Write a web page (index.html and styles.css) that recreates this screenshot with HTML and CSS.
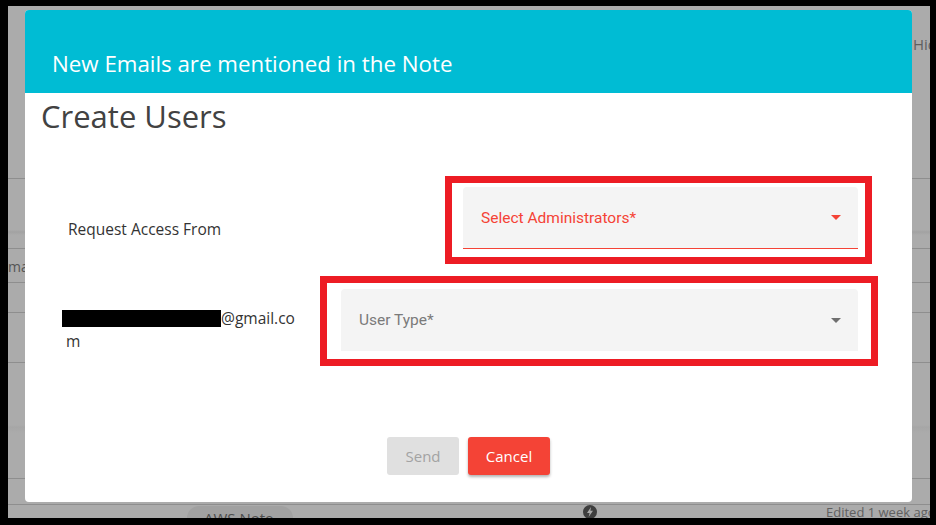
FILE: index.html
```html
<!DOCTYPE html>
<html lang="en">
<head>
  <meta charset="UTF-8">
  <meta name="viewport" content="width=device-width, initial-scale=1.0">
  <title>Create Users</title>
  <link rel="stylesheet" href="styles.css">
</head>
<body>

  <div class="screen">
    <!-- Page behind the dialog -->
    <div class="backdrop">
      <div class="bg-row bg-top"><span class="bg-hint">Hide</span></div>
      <div class="bg-row bg-r2"></div>
      <div class="bg-row bg-r3"><span class="bg-cut">ma</span></div>
      <div class="bg-row bg-r4"></div>
      <div class="bg-row bg-r5"></div>
      <div class="bg-row bg-r6"></div>
      <div class="bg-row bg-r7"></div>
      <div class="bg-footer">
        <span class="note-pill">AWS Note</span>
        <span class="bolt">
          <svg width="14" height="14" viewBox="0 0 14 14">
            <circle cx="7" cy="7" r="7" fill="#3f3f3f"/>
            <polygon points="8,2 4,8 6.6,8 5.6,12 10,5.8 7.4,5.8" fill="#ababab"/>
          </svg>
        </span>
        <span class="edited">Edited 1 week ago</span>
      </div>
    </div>

    <!-- Dialog -->
    <div class="modal">
      <div class="modal-header">
        <h2>New Emails are mentioned in the Note</h2>
      </div>

      <div class="modal-body">
        <h1 class="modal-title">Create Users</h1>

        <div class="form-row row-admins">
          <div class="field-label">Request Access From</div>
          <div class="mark-box mark-admins">
            <div class="select select-error">
              <span>Select Administrators*</span>
              <svg class="caret" width="10" height="5" viewBox="0 0 10 5"><polygon points="0,0 10,0 5,5"/></svg>
            </div>
          </div>
        </div>

        <div class="form-row row-type">
          <div class="field-email"><span class="redact"></span>@gmail.com</div>
          <div class="mark-box mark-type">
            <div class="select">
              <span>User Type*</span>
              <svg class="caret" width="10" height="5" viewBox="0 0 10 5"><polygon points="0,0 10,0 5,5"/></svg>
            </div>
          </div>
        </div>
      </div>

      <div class="modal-actions">
        <button class="btn btn-send" disabled>Send</button>
        <button class="btn btn-cancel">Cancel</button>
      </div>
    </div>
  </div>

</body>
</html>
```

FILE: styles.css
```css
/* Page frame */
body {
  margin: 0;
  background: #000;
  font-family: 'Open Sans', sans-serif;
}

.screen {
  position: relative;
  margin: 6px 6px 7px 8px;
  height: 512px;
  background-color: #ababab;
  overflow: hidden;
}

/* Background page (dimmed) */
.backdrop {
  display: flex;
  flex-direction: column;
}

.bg-row {
  border-bottom: 1px solid #8e8e8e;
  flex: none;
  display: flex;
  align-items: flex-start;
}

.bg-top { height: 172px; }
.bg-r2 { height: 69px; background: linear-gradient(#ababab 0, #ababab 51px, #a2a2a2 53px, #ababab 56px); }
.bg-r3 { height: 33px; align-items: center; }
.bg-r4 { height: 29px; }
.bg-r5 { height: 49px; }
.bg-r6 { height: 115px; background: linear-gradient(#ababab 0, #ababab 62px, #a6a6a6 64px, #ababab 70px); }
.bg-r7 { height: 25px; }

.bg-hint {
  margin: 28px 0 0 905px;
  font-size: 15px;
  color: #5f5f5f;
  white-space: nowrap;
}

.bg-cut {
  font-size: 14px;
  color: #555;
  margin-top: 1px;
}

.bg-footer {
  display: flex;
  align-items: flex-start;
  height: 30px;
  font-size: 13px;
  color: #606060;
  white-space: nowrap;
}

.bg-footer > span {
  flex: none;
}

.note-pill {
  margin-left: 179px;
  width: 106px;
  height: 24px;
  padding-left: 17px;
  box-sizing: border-box;
  background-color: #a1a1a1;
  border-radius: 12px 12px 0 0;
  color: #4e4e4e;
  font-size: 15px;
  line-height: 24px;
  margin-top: 1px;
}

.bolt {
  margin-left: 290px;
  display: flex;
}

.edited {
  margin-left: 229px;
  line-height: 14px;
}

/* Dialog */
.modal {
  position: absolute;
  top: 4px;
  left: 17px;
  width: 887px;
  background-color: #fff;
  border-radius: 4px;
  padding-bottom: 27px;
}

.modal-header {
  height: 83px;
  box-sizing: border-box;
  background-color: #00bcd4;
  border-radius: 4px 4px 0 0;
  display: flex;
  align-items: flex-end;
  padding: 0 0 14px 27px;
}

.modal-header h2 {
  margin: 0;
  font-size: 22.3px;
  font-weight: 400;
  line-height: 30px;
  color: #fff;
}

.modal-body {
  padding: 2px 16px 0;
}

.modal-title {
  margin: 0;
  font-size: 31px;
  font-weight: 400;
  line-height: 42px;
  color: #424242;
}

.form-row {
  display: flex;
  align-items: flex-start;
}

.row-admins { margin-top: 39px; }
.row-type { margin-top: 12px; }

.field-label {
  padding: 42px 0 0 27px;
  font-size: 15.5px;
  line-height: 22px;
  color: #333;
}

.field-email {
  width: 236px;
  padding: 31px 0 0 25px;
  font-size: 15.5px;
  line-height: 23px;
  color: #333;
  word-break: break-all;
}

.redact {
  display: inline-block;
  width: 159px;
  height: 17px;
  margin-left: -4px;
  background-color: #000;
  vertical-align: -3px;
}

/* Red annotation frames */
.mark-box {
  margin-left: auto;
  border: 7px solid #ed1c24;
  box-sizing: border-box;
}

.mark-admins {
  width: 427px;
  margin-right: 24px;
  padding: 4px 7px 8px 11px;
}

.mark-type {
  width: 558px;
  margin-right: 18px;
  padding: 6px 13px 8px 14px;
}

/* Select fields */
.select {
  height: 62px;
  box-sizing: border-box;
  background-color: #f4f4f4;
  border-radius: 4px 4px 0 0;
  display: flex;
  align-items: center;
  justify-content: space-between;
  padding: 0 17px 0 18px;
  font-family: Roboto, sans-serif;
  font-size: 15.5px;
  color: #7a7a7a;
}

.select .caret {
  fill: #6f6f6f;
}

.select-error {
  color: #f44336;
  border-bottom: 1px solid #f44336;
}

.select-error .caret {
  fill: #f44336;
}

/* Buttons */
.modal-actions {
  display: flex;
  justify-content: center;
  gap: 9px;
  margin-top: 71px;
}

.btn {
  height: 38px;
  padding: 0;
  border: none;
  border-radius: 3px;
  font-family: 'Open Sans', sans-serif;
  font-size: 15px;
}

.btn-send {
  width: 72px;
  background-color: #e0e0e0;
  color: #a3a3a3;
}

.btn-cancel {
  width: 82px;
  background-color: #f44336;
  color: #fff;
  box-shadow: 0 2px 3px rgba(0, 0, 0, 0.3);
}
```
